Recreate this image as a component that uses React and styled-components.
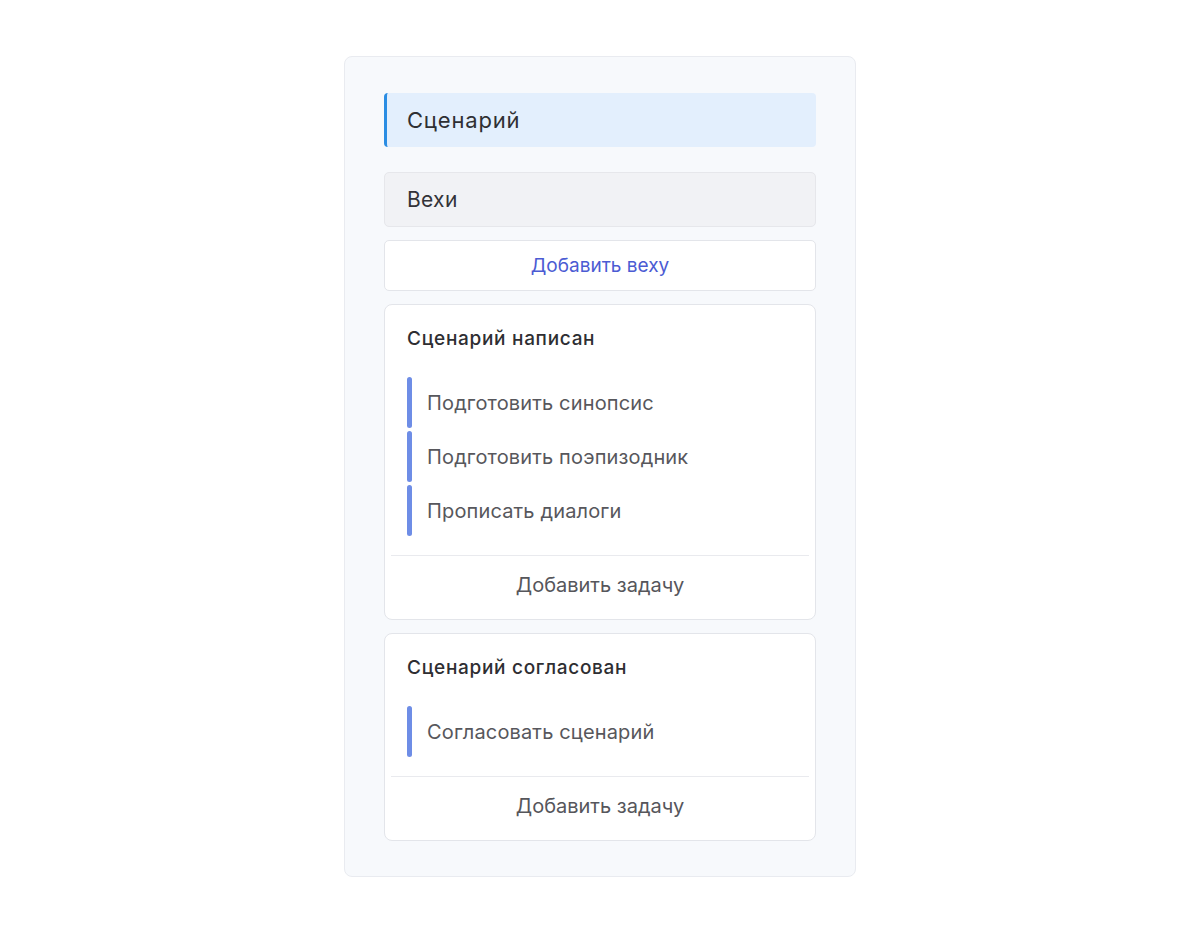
import React from "react";
import styled, { createGlobalStyle } from "styled-components";

const Global = createGlobalStyle`
  html, body { margin: 0; padding: 0; background: #ffffff; }
  body { font-family: Inter, "Noto Sans", sans-serif; -webkit-font-smoothing: antialiased; }
  * { box-sizing: border-box; }
`;

const Page = styled.div`
  display: flex;
  justify-content: center;
  align-items: flex-start;
  padding-top: 56px;
`;

const Panel = styled.div`
  width: 512px;
  background: #f7f9fc;
  border: 1px solid #e9ebf0;
  border-radius: 8px;
  padding: 36px 39px 35px;
  display: flex;
  flex-direction: column;
`;

const SectionHeader = styled.div`
  height: 54px;
  display: flex;
  align-items: center;
  padding-left: 20px;
  background: #e3effd;
  border-left: 3px solid #2b8de3;
  border-radius: 4px;
  font-size: 22px;
  letter-spacing: 0.8px;
  color: #2f2f33;
  margin-bottom: 25px;
`;

const GroupHeader = styled.div`
  height: 55px;
  display: flex;
  align-items: center;
  padding-left: 22px;
  background: #f1f2f5;
  border: 1px solid #e6e7eb;
  border-radius: 5px;
  font-size: 21px;
  letter-spacing: 0.3px;
  color: #333338;
  margin-bottom: 13px;
`;

const AddButton = styled.button`
  height: 51px;
  width: 100%;
  background: #ffffff;
  border: 1px solid #e3e5ea;
  border-radius: 5px;
  font-family: inherit;
  font-size: 19px;
  color: #4b5bd3;
  cursor: pointer;
  margin-bottom: 13px;
`;

const Card = styled.div`
  background: #ffffff;
  border: 1px solid #e3e5ea;
  border-radius: 8px;
  padding: 0 6px;
  margin-bottom: ${(p) => (p.$last ? "0" : "13px")};
`;

const CardTitle = styled.div`
  padding: 21px 0 0 16px;
  font-size: 19px;
  line-height: 26px;
  font-weight: 500;
  letter-spacing: 0.7px;
  color: #2e2e32;
  margin-bottom: 25px;
`;

const TaskList = styled.div`
  display: flex;
  flex-direction: column;
  gap: 3px;
  padding-left: 16px;
  margin-bottom: 19px;
`;

const Task = styled.div`
  display: flex;
  align-items: center;
  height: 51px;
  gap: 15px;
`;

const TaskBar = styled.span`
  width: 5px;
  align-self: stretch;
  background: #6e8de6;
  border-radius: 3px;
`;

const TaskText = styled.span`
  font-size: 20px;
  letter-spacing: 0.15px;
  color: #57575c;
`;

const Footer = styled.div`
  border-top: 1px solid #e9eaee;
  padding: 16px 0 21px;
  text-align: center;
  font-size: 20px;
  line-height: 26px;
  color: #56565b;
  cursor: pointer;
`;

const milestones = [
  {
    title: "Сценарий написан",
    tasks: ["Подготовить синопсис", "Подготовить поэпизодник", "Прописать диалоги"],
  },
  {
    title: "Сценарий согласован",
    tasks: ["Согласовать сценарий"],
  },
];

export default function App() {
  return (
    <>
      <Global />
      <Page>
        <Panel>
          <SectionHeader>Сценарий</SectionHeader>
          <GroupHeader>Вехи</GroupHeader>
          <AddButton>Добавить веху</AddButton>
          {milestones.map((m, i) => (
            <Card key={m.title} $last={i === milestones.length - 1}>
              <CardTitle>{m.title}</CardTitle>
              <TaskList>
                {m.tasks.map((t) => (
                  <Task key={t}>
                    <TaskBar />
                    <TaskText>{t}</TaskText>
                  </Task>
                ))}
              </TaskList>
              <Footer>Добавить задачу</Footer>
            </Card>
          ))}
        </Panel>
      </Page>
    </>
  );
}
